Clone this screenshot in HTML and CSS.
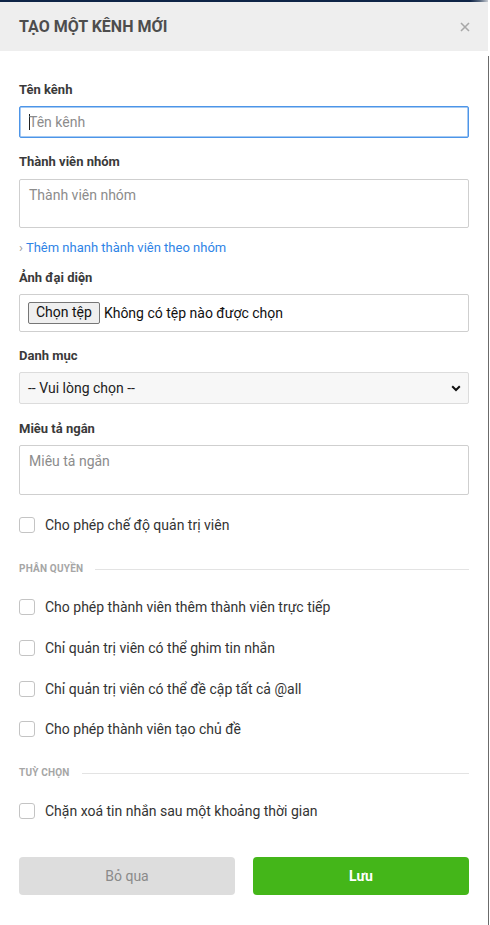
FILE: index.html
```html
<!DOCTYPE html>
<html lang="vi">
<head>
<meta charset="utf-8">
<title>Tạo một kênh mới</title>
<link rel="stylesheet" href="styles.css">
</head>
<body>
<div class="topband"></div>
<div class="page">
  <div class="modal">
    <div class="header">
      <div class="title">TẠO MỘT KÊNH MỚI</div>
      <svg class="close" width="10" height="10" viewBox="0 0 10 10"><path d="M1 1 L9 9 M9 1 L1 9" stroke="#a8a8a8" stroke-width="1.6" fill="none"/></svg>
    </div>
    <div class="body">
      <div class="field first">
        <div class="label">Tên kênh</div>
        <div class="input focused"><span class="caret"></span><span class="ph">Tên kênh</span></div>
      </div>
      <div class="field">
        <div class="label">Thành viên nhóm</div>
        <div class="input area"><span class="ph">Thành viên nhóm</span></div>
      </div>
      <div class="quick"><span class="chev">›</span> Thêm nhanh thành viên theo nhóm</div>
      <div class="field f3">
        <div class="label">Ảnh đại diện</div>
        <div class="input file"><span class="filebtn">Chọn tệp</span><span class="filetext">Không có tệp nào được chọn</span></div>
      </div>
      <div class="field">
        <div class="label">Danh mục</div>
        <div class="input select"><span class="seltext">-- Vui lòng chọn --</span>
          <svg width="10" height="7" viewBox="0 0 10 7"><path d="M1.2 1.3 L5 5 L8.8 1.3" stroke="#111" stroke-width="2" fill="none"/></svg>
        </div>
      </div>
      <div class="field f5">
        <div class="label">Miêu tả ngắn</div>
        <div class="input area"><span class="ph">Miêu tả ngắn</span></div>
      </div>
      <div class="check admin"><span class="box"></span><span>Cho phép chế độ quản trị viên</span></div>

      <div class="section s1"><span>PHÂN QUYỀN</span><span class="line"></span></div>
      <div class="check c1"><span class="box"></span><span>Cho phép thành viên thêm thành viên trực tiếp</span></div>
      <div class="check cn"><span class="box"></span><span>Chỉ quản trị viên có thể ghim tin nhắn</span></div>
      <div class="check cn"><span class="box"></span><span>Chỉ quản trị viên có thể đề cập tất cả @all</span></div>
      <div class="check cn"><span class="box"></span><span>Cho phép thành viên tạo chủ đề</span></div>

      <div class="section s2"><span>TUỲ CHỌN</span><span class="line"></span></div>
      <div class="check c2"><span class="box"></span><span>Chặn xoá tin nhắn sau một khoảng thời gian</span></div>

      <div class="actions">
        <div class="btn cancel">Bỏ qua</div>
        <div class="btn save">Lưu</div>
      </div>
    </div>
  </div>
  <div class="rail"><div class="railline"></div></div>
</div>
</body>
</html>
```

FILE: styles.css
```css
* { box-sizing: border-box; }
html, body { margin: 0; padding: 0; background: #fff; }
body {
  font-family: Roboto, "Noto Sans", sans-serif;
  color: #333;
  width: 490px;
  height: 925px;
  overflow: hidden;
}
.topband {
  height: 2px;
  background: linear-gradient(to right, #0e2447 0, #0e2447 470px, #5a6a80 480px, #c9cdd3 488px, #fff 488px);
}
.page { display: flex; }
.modal { width: 488px; background: #fff; }
.rail { width: 2px; padding-top: 54px; display: flex; }
.railline { width: 1px; background: #6b6b6b; height: 900px; }

.header {
  height: 48.5px;
  background: #eeeeee;
  display: flex;
  align-items: center;
  justify-content: space-between;
  padding: 0 18px 0 19px;
}
.title {
  font-size: 16px;
  font-weight: 700;
  color: #4d4d4d;
  padding-top: 1px;
}
.close { margin-top: 2px; }

.body { padding: 0 19px; display: flex; flex-direction: column; }
.field { margin-top: 15px; }
.field.first { margin-top: 30px; }
.field.f3 { margin-top: 12px; }
.field.f5 { margin-top: 15.5px; }
.label {
  font-size: 13px;
  font-weight: 700;
  line-height: 18px;
  color: #3a3a3a;
  margin-bottom: 7.5px;
}
.input {
  height: 32px;
  border: 1px solid #cfcfcf;
  border-radius: 2px;
  font-size: 14px;
  line-height: 20px;
  padding: 5px 9px;
  display: flex;
  align-items: center;
  background: #fff;
}
.input.focused { border-color: #4d95e8; box-shadow: 0 0 0 0.5px #4d95e8 inset; }
.caret { width: 1px; height: 16px; background: #222; margin-right: -1px; }
.ph { color: #8c8c8c; }
.input.area { height: 49.5px; align-items: flex-start; padding-top: 5px; }
.quick {
  font-size: 13px;
  line-height: 18px;
  color: #2f84e6;
  margin-top: 10.5px;
}
.quick .chev { color: #9a9a9a; }
.input.file { height: 37.5px; padding: 0 8px; }
.filebtn {
  display: inline-block;
  height: 21.5px;
  border: 1px solid #767676;
  border-radius: 2px;
  background: #efefef;
  color: #111;
  font-size: 14px;
  line-height: 19px;
  padding: 0 7px;
  margin-right: 4px;
}
.filetext { color: #111; font-size: 14px; }
.input.select {
  background: #f7f7f7;
  border-color: #dcdcdc;
  justify-content: space-between;
  padding: 0 7px 0 8px;
}
.seltext { color: #222; }

.check {
  display: flex;
  align-items: center;
  gap: 10px;
  font-size: 14px;
  line-height: 20px;
  color: #333;
  height: 20px;
}
.box {
  width: 16px; height: 16px;
  border: 1px solid #c4c4c4;
  border-radius: 3px;
  background: #fff;
  flex: none;
}
.check.admin { margin-top: 20.4px; }
.section {
  display: flex;
  align-items: center;
  gap: 12px;
  font-size: 10px;
  font-weight: 700;
  line-height: 14px;
  color: #a6a6a6;
  letter-spacing: 0.2px;
}
.section .line { flex: 1; height: 1px; background: #e3e3e3; }
.section.s1 { margin-top: 27.4px; }
.check.c1 { margin-top: 21px; }
.check.cn { margin-top: 20.7px; }
.section.s2 { margin-top: 26.8px; }
.check.c2 { margin-top: 20.8px; }

.actions {
  display: grid;
  grid-template-columns: 216px 216px;
  justify-content: space-between;
  margin-top: 36px;
}
.btn {
  height: 38.5px;
  border-radius: 4px;
  display: flex;
  align-items: center;
  justify-content: center;
  font-size: 14px;
}
.cancel { background: #dddddd; color: #8a8a8a; }
.save { background: #44b619; color: #fff; font-weight: 700; }
```
